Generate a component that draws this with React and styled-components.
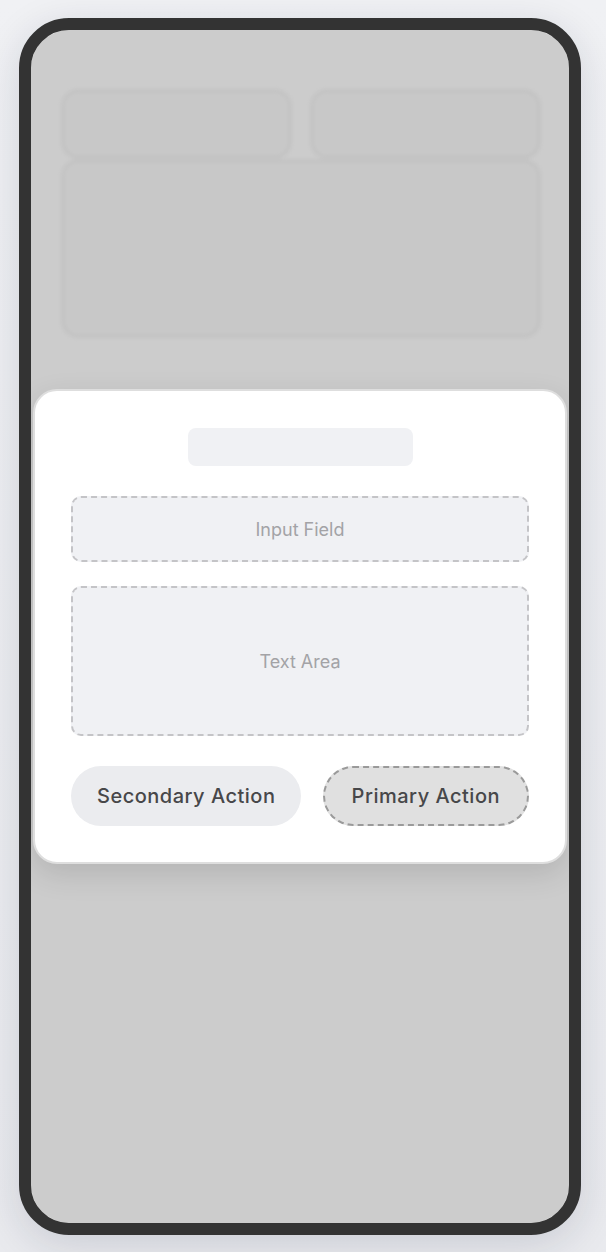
import React from "react";
import styled, { createGlobalStyle } from "styled-components";

const Global = createGlobalStyle`
  html, body { margin: 0; padding: 0; }
  body {
    background: linear-gradient(180deg, #f0f1f4 0%, #e9eaee 100%);
    font-family: Inter, "Noto Sans", "Liberation Sans", sans-serif;
    -webkit-font-smoothing: antialiased;
  }
  * { box-sizing: border-box; }
`;

const Page = styled.div`
  padding: 18px 0 17px 19px;
`;

const Phone = styled.div`
  position: relative;
  width: 562px;
  height: 1217px;
  border: 12px solid #333333;
  border-radius: 50px;
  background: #ffffff;
  overflow: hidden;
  box-shadow: 0 10px 40px rgba(20, 30, 60, 0.14);
`;

const Content = styled.div`
  padding: 60px 29px 0 31px;
  display: grid;
  grid-template-columns: 1fr 1fr;
  column-gap: 20px;
  row-gap: 2px;
  filter: blur(2px);
`;

const Card = styled.div`
  grid-column: ${(p) => (p.$wide ? "1 / -1" : "auto")};
  height: ${(p) => p.$h}px;
  background: #fbfbfb;
  border: 2px solid #ececec;
  border-radius: 16px;
`;

const Overlay = styled.div`
  position: absolute;
  inset: 0;
  background: rgba(0, 0, 0, 0.2);
  display: flex;
  align-items: center;
  justify-content: center;
  padding: 0 2px;
`;

const Modal = styled.div`
  width: 100%;
  background: #ffffff;
  border: 2px solid #dedede;
  border-radius: 24px;
  padding: 37px 36px 36px;
  display: flex;
  flex-direction: column;
  box-shadow: 0 10px 30px rgba(0, 0, 0, 0.12);
`;

const TitleBar = styled.div`
  align-self: center;
  width: 225px;
  height: 38px;
  border-radius: 8px;
  background: #f0f1f4;
  margin-bottom: 30px;
`;

const Field = styled.div`
  height: ${(p) => p.$h}px;
  margin-bottom: ${(p) => p.$mb}px;
  background: #f0f1f4;
  border: 2px dashed #c4c4c7;
  border-radius: 10px;
  display: flex;
  align-items: center;
  justify-content: center;
  color: #a3a3a6;
  font-size: 18px;
  font-weight: 400;
`;

const Actions = styled.div`
  display: flex;
  justify-content: space-between;
  align-items: center;
`;

const Button = styled.div`
  height: 60px;
  padding: 0 ${(p) => (p.$primary ? 27 : 26)}px;
  border-radius: 30px;
  display: flex;
  align-items: center;
  justify-content: center;
  font-size: 20px;
  font-weight: 500;
  letter-spacing: 0.5px;
  color: #474749;
  background: ${(p) => (p.$primary ? "#e0e0e0" : "#ebecef")};
  border: ${(p) => (p.$primary ? "2px dashed #9a9a9a" : "none")};
  white-space: nowrap;
`;

export default function App() {
  return (
    <>
      <Global />
      <Page>
        <Phone>
          <Content>
            <Card $h={68} />
            <Card $h={68} />
            <Card $wide $h={177} />
          </Content>
          <Overlay>
            <Modal>
              <TitleBar />
              <Field $h={66} $mb={24}>Input Field</Field>
              <Field $h={150} $mb={30}>Text Area</Field>
              <Actions>
                <Button>Secondary Action</Button>
                <Button $primary>Primary Action</Button>
              </Actions>
            </Modal>
          </Overlay>
        </Phone>
      </Page>
    </>
  );
}
